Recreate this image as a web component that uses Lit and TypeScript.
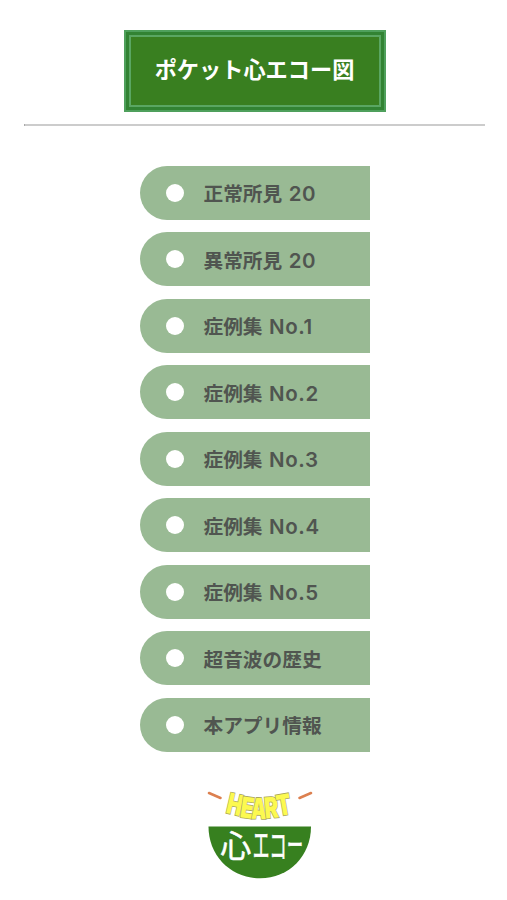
import { LitElement, html, css, svg } from "lit";
import { customElement, property } from "lit/decorators.js";

@customElement("menu-tab")
class MenuTab extends LitElement {
  @property() label = "";
  @property() suffix = "";

  static styles = css`
    :host { display: block; }
    .tab {
      box-sizing: border-box;
      height: 54px;
      display: flex;
      align-items: center;
      padding-left: 26px;
      background: #99ba94;
      border-radius: 27px 0 0 27px;
      color: #505550;
      font: 700 19.7px/54px "Noto Sans CJK JP", sans-serif;
      white-space: pre;
    }
    .dot { width: 18px; height: 18px; margin-right: 19.5px; border-radius: 50%; background: #fff; }
    .label { padding-top: 1px; }
    .suffix { margin-left: 6.5px; padding-top: 3px; font: 600 20.5px/54px Inter, sans-serif; letter-spacing: 0.6px; }
  `;

  render() {
    return html`<div class="tab">
      <span class="dot"></span><span class="label">${this.label}</span>
      ${this.suffix ? html`<span class="suffix">${this.suffix}</span>` : ""}
    </div>`;
  }
}

@customElement("heart-logo")
class HeartLogo extends LitElement {
  static styles = css`
    :host { display: block; }
    svg { display: block; }
    .arc {
      font: 900 24px Inter, sans-serif;
      fill: #fcf950;
      stroke: #aaa65c;
      stroke-width: 1.3;
      paint-order: stroke;
      text-anchor: middle;
    }
    .bowl {
      font: 400 31px "Noto Sans CJK JP", sans-serif;
      fill: #fff;
      stroke: #fff;
      stroke-width: 0.5;
      stroke-linejoin: round;
      text-anchor: middle;
    }
  `;

  render() {
    const arc: [string, number, number, number, number][] = [
      ["H", 27.5, 24.5, 13, 0.84],
      ["E", 41, 27.8, 8, 0.88],
      ["A", 53.5, 29, 1, 0.8],
      ["R", 67.3, 28, -5, 0.87],
      ["T", 80.5, 25, -10, 0.87],
    ];
    const bowl: [string, number, number, number, number][] = [
      ["心", 30.8, 67, 1.0, 1],
      ["エ", 56, 68, 0.54, 1.12],
      ["コ", 73, 67.5, 0.57, 1.08],
      ["ー", 90, 66.3, 0.53, 1],
    ];
    return html`<svg width="110" height="100" viewBox="0 -10 110 100">
      <path d="M4 3 15.5 8M94.5 8 106 3" fill="none" stroke="#dc8050" stroke-width="2.5" stroke-linecap="round" />
      <path d="M3.5 36.5H106C106 66 84 88.3 55 88.3S3.5 66 3.5 36.5Z" fill="#37801f" />
      ${arc.map(([c, x, y, r, s]) => svg`<text class="arc" transform="translate(${x} ${y}) rotate(${r}) scale(${s} 1.2)">${c}</text>`)}
      ${bowl.map(([c, x, y, sx, sy]) => svg`<text class="bowl" transform="translate(${x} ${y}) scale(${sx} ${sy})">${c}</text>`)}
    </svg>`;
  }
}

@customElement("app-root")
class AppRoot extends LitElement {
  static styles = css`
    :host {
      display: flex;
      flex-direction: column;
      box-sizing: border-box;
      height: 900px;
      padding: 30px 22px 0 24px;
      background: #fff;
      overflow: hidden;
    }
    .title {
      box-sizing: border-box;
      align-self: center;
      width: 262px;
      height: 81.5px;
      margin: 0;
      padding: 3px;
      border: 2px solid #4fa05c;
      background: #328333;
    }
    .inner {
      box-sizing: border-box;
      height: 100%;
      display: flex;
      align-items: center;
      justify-content: center;
      padding-bottom: 5px;
      border: 2px solid #5aa662;
      background: #397f20;
      color: #fff;
      font: 700 22.2px/1 "Noto Sans CJK JP", sans-serif;
      white-space: nowrap;
    }
    .rule { height: 2px; margin-top: 12px; background: #ccc; border-left: 1px solid #aaa; }
    .menu {
      width: 229.5px;
      margin: 40px 0 0 116px;
      display: flex;
      flex-direction: column;
      gap: 12.5px;
    }
    .logo { margin: 28.5px 0 0 181px; }
  `;

  private items: [string, string][] = [
    ["正常所見", "20"], ["異常所見", "20"], ["症例集", "No.1"], ["症例集", "No.2"], ["症例集", "No.3"],
    ["症例集", "No.4"], ["症例集", "No.5"], ["超音波の歴史", ""], ["本アプリ情報", ""],
  ];

  render() {
    return html`
      <h1 class="title"><span class="inner">ポケット心エコー図</span></h1>
      <div class="rule"></div>
      <nav class="menu">
        ${this.items.map(([t, s]) => html`<menu-tab .label=${t} .suffix=${s}></menu-tab>`)}
      </nav>
      <heart-logo class="logo"></heart-logo>
    `;
  }
}
